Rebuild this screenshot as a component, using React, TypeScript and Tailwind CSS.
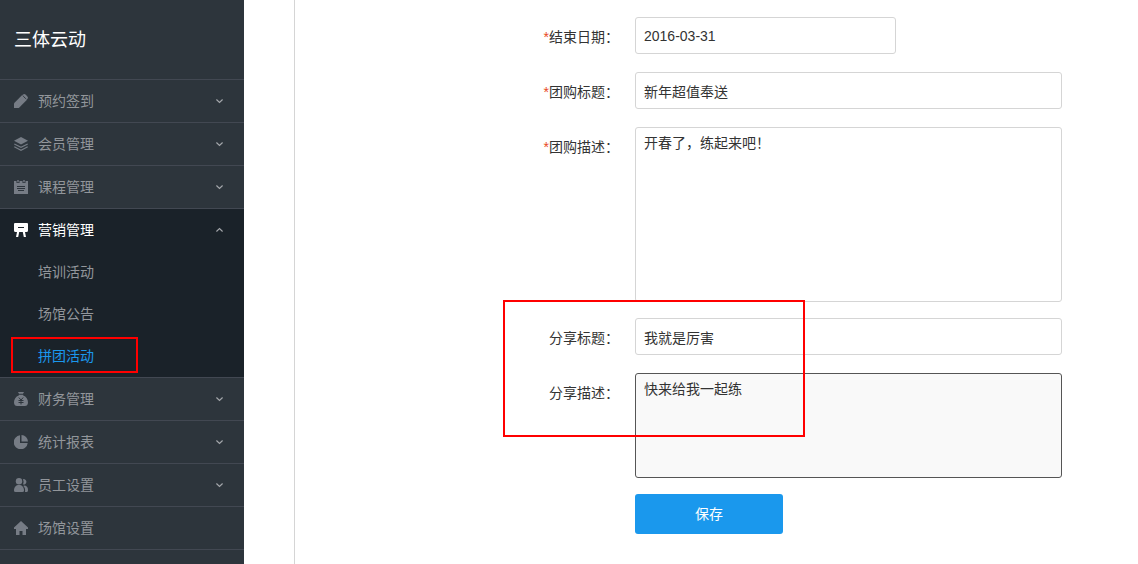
import React from "react";

type IconName =
  | "pencil"
  | "layers"
  | "calendar"
  | "board"
  | "money"
  | "pie"
  | "users"
  | "home";

interface MenuItem {
  label: string;
  icon: IconName;
  children?: string[];
  leaf?: boolean;
}

const menu: MenuItem[] = [
  { label: "预约签到", icon: "pencil" },
  { label: "会员管理", icon: "layers" },
  { label: "课程管理", icon: "calendar" },
  {
    label: "营销管理",
    icon: "board",
    children: ["培训活动", "场馆公告", "拼团活动"],
  },
  { label: "财务管理", icon: "money" },
  { label: "统计报表", icon: "pie" },
  { label: "员工设置", icon: "users" },
  { label: "场馆设置", icon: "home", leaf: true },
];

const currentPage = "拼团活动";

const icons: Record<IconName, React.ReactNode> = {
  pencil: (
    <>
      <path d="M0 14V9.200L8.200 1l4.800 4.800L4.800 14z" />
      <path d="M9 .6Q10.200-.5 11.500.6l1.900 1.900Q14.500 3.800 13.400 5l-.5.5-4.400-4.400z" />
      <path d="M9.300 2.300l2.400 2.400" stroke="#2d353c" strokeWidth=".9" />
    </>
  ),
  layers: (
    <>
      <path d="M7 0l7 3.800-7 3.800-7-3.800z" />
      <path
        d="M.3 7 7 10.400 13.700 7M.3 9.800 7 13.300l6.700-3.500"
        fill="none"
        stroke="currentColor"
        strokeWidth="1.200"
      />
    </>
  ),
  calendar: (
    <>
      <path
        fillRule="evenodd"
        d="M0 1h2.500v2h3V1h3v2h3V1H14v13H0zM3 6v1h8V6zM3 8v1h8V8zM4 10v1h6v-1z"
      />
      <path d="M3.300 0h1.400v2.200H3.300zM9.300 0h1.400v2.200H9.300z" />
    </>
  ),
  board: (
    <>
      <path
        fillRule="evenodd"
        d="M1 0h12q1 0 1 1v6.500q0 1.500-1.500 1.500h-11Q0 9 0 7.500V1q0-1 1-1zM4 4v1h6V4z"
      />
      <path d="M3 9h2.200L4.200 14H2zM8.800 9H11l1 5H9.800z" />
    </>
  ),
  money: (
    <>
      <path d="M4 0h6L9 1.800H5zM4.800 2.800h4.400v.8C12.300 4.600 14 7.500 14 10.500 14 13 12.500 14 11 14H3c-1.500 0-3-1-3-3.500 0-3 1.700-5.900 4.800-6.900z" />
      <path
        d="M4.800 5.500 7 8l2.200-2.500M7 8v4.500M4.500 8.500h5M4.500 10.500h5"
        fill="none"
        stroke="#2d353c"
        strokeWidth="1"
      />
    </>
  ),
  pie: (
    <>
      <path d="M6 .3V8h7.700A7 7 0 1 1 6 .3z" />
      <path d="M7.500 0A6.800 6.800 0 0 1 14 6.500H7.500z" />
    </>
  ),
  users: (
    <>
      <circle cx="5" cy="3.200" r="3.200" />
      <path d="M0 12.500C0 9 2 7 5 7s5 2 5 5.500Q10 14 8.500 14h-7Q0 14 0 12.500z" />
      <path d="M9 1.200a2.700 2.700 0 1 1 0 5.200Q10.200 3.800 9 1.200zM10 7.600c2.600 0 4 1.800 4 4.400 0 1-.4 2-1.200 2H11q.600-4-1.600-6z" />
    </>
  ),
  home: <path d="M7 0l7 6.500V8h-2v6H8.500v-4h-3v4H2V8H0V6.500z" />,
};

function MenuIcon({ name }: { name: IconName }) {
  return (
    <svg
      viewBox="0 0 14 14"
      className="h-3.5 w-3.5 shrink-0"
      fill="currentColor"
      aria-hidden="true"
    >
      {icons[name]}
    </svg>
  );
}

function Chevron({ up }: { up?: boolean }) {
  return (
    <svg
      viewBox="0 0 7 8"
      className="ml-auto h-2 w-[7px] text-[#a3a6aa]"
      fill="none"
      stroke="currentColor"
      strokeWidth="1.200"
      aria-hidden="true"
    >
      <path d={up ? "M.4 5.500l3.100-3 3.100 3" : "M.4 2.500l3.100 3 3.100-3"} />
    </svg>
  );
}

function Sidebar() {
  return (
    <aside className="w-61 shrink-0 bg-[#2d353c] text-sm text-[#92969b]">
      <h1 className="flex h-[79px] items-center pl-3.5 text-lg text-white">
        三体云动
      </h1>
      <nav className="border-b border-[#424852]">
        {menu.map((item) => (
          <div
            key={item.label}
            className={
              item.children
                ? "border-t border-[#424852] bg-[#1a2229]"
                : "border-t border-[#424852]"
            }
          >
            <button
              type="button"
              className={
                item.children
                  ? "flex h-[42px] w-full items-center gap-2.5 pr-[21px] pl-3.5 text-white"
                  : "flex h-[42px] w-full items-center gap-2.5 pr-[21px] pl-3.5"
              }
            >
              <span className={item.children ? "text-white" : "text-[#767c85]"}>
                <MenuIcon name={item.icon} />
              </span>
              {item.label}
              {!item.leaf && <Chevron up={!!item.children} />}
            </button>
            {item.children?.map((child) => (
              <a
                key={child}
                href="#"
                className={
                  child === currentPage
                    ? "relative flex h-[42px] items-center pl-[38px] text-[#1a98ed]"
                    : "flex h-[42px] items-center pl-[38px]"
                }
              >
                {child}
                {child === currentPage && (
                  <span className="absolute top-0.5 left-[11px] h-9 w-[127px] border-2 border-[#ff0000]" />
                )}
              </a>
            ))}
          </div>
        ))}
      </nav>
    </aside>
  );
}

interface FieldProps {
  id: string;
  label: string;
  required?: boolean;
  children: React.ReactNode;
}

function Field({ id, label, required, children }: FieldProps) {
  return (
    <div className="flex items-start">
      <label
        htmlFor={id}
        className="mr-4 w-[324px] shrink-0 pt-2.5 text-right leading-5"
      >
        {required && <span className="text-[#e8481c]">*</span>}
        {label}：
      </label>
      {children}
    </div>
  );
}

const inputClass =
  "h-[37px] min-w-0 rounded-[3px] border border-[#d5d5d5] bg-white px-2 outline-none";

export default function App() {
  return (
    <div className="flex min-h-screen bg-white font-['Liberation_Sans','Noto_Sans_CJK_SC',sans-serif]">
      <Sidebar />
      <main className="ml-[50px] min-w-0 flex-1 border-l border-[#d5d5d5]">
        <form className="flex flex-col pt-[17px] pr-19 text-sm text-[#333333]">
          <div className="mb-4 flex flex-col gap-[18px]">
            <Field id="endDate" label="结束日期" required>
              <input
                id="endDate"
                type="text"
                defaultValue="2016-03-31"
                className={`${inputClass} w-[261px]`}
              />
            </Field>
            <Field id="groupTitle" label="团购标题" required>
              <input
                id="groupTitle"
                type="text"
                defaultValue="新年超值奉送"
                className={`${inputClass} flex-1`}
              />
            </Field>
            <Field id="groupDesc" label="团购描述" required>
              <textarea
                id="groupDesc"
                defaultValue="开春了，练起来吧！"
                className="h-[175px] min-w-0 flex-1 resize-none rounded-[3px] border border-[#d5d5d5] px-2 py-[5px] leading-5 outline-none"
              />
            </Field>
          </div>

          <div className="relative mb-4 flex flex-col gap-[18px]">
            <Field id="shareTitle" label="分享标题">
              <input
                id="shareTitle"
                type="text"
                defaultValue="我就是厉害"
                className={`${inputClass} flex-1`}
              />
            </Field>
            <Field id="shareDesc" label="分享描述">
              <textarea
                id="shareDesc"
                defaultValue="快来给我一起练"
                className="h-[105px] min-w-0 flex-1 resize-none rounded-[3px] border border-[#555555] bg-[#f9f9f9] px-2 py-[5px] leading-5 outline-none"
              />
            </Field>
            <div className="pointer-events-none absolute -top-[18px] left-52 h-[137px] w-[302px] border-2 border-[#ff0000]" />
          </div>

          <button
            type="submit"
            className="ml-[340px] h-10 w-37 rounded-[3px] bg-[#1a98ed] text-white"
          >
            保存
          </button>
        </form>
      </main>
    </div>
  );
}
